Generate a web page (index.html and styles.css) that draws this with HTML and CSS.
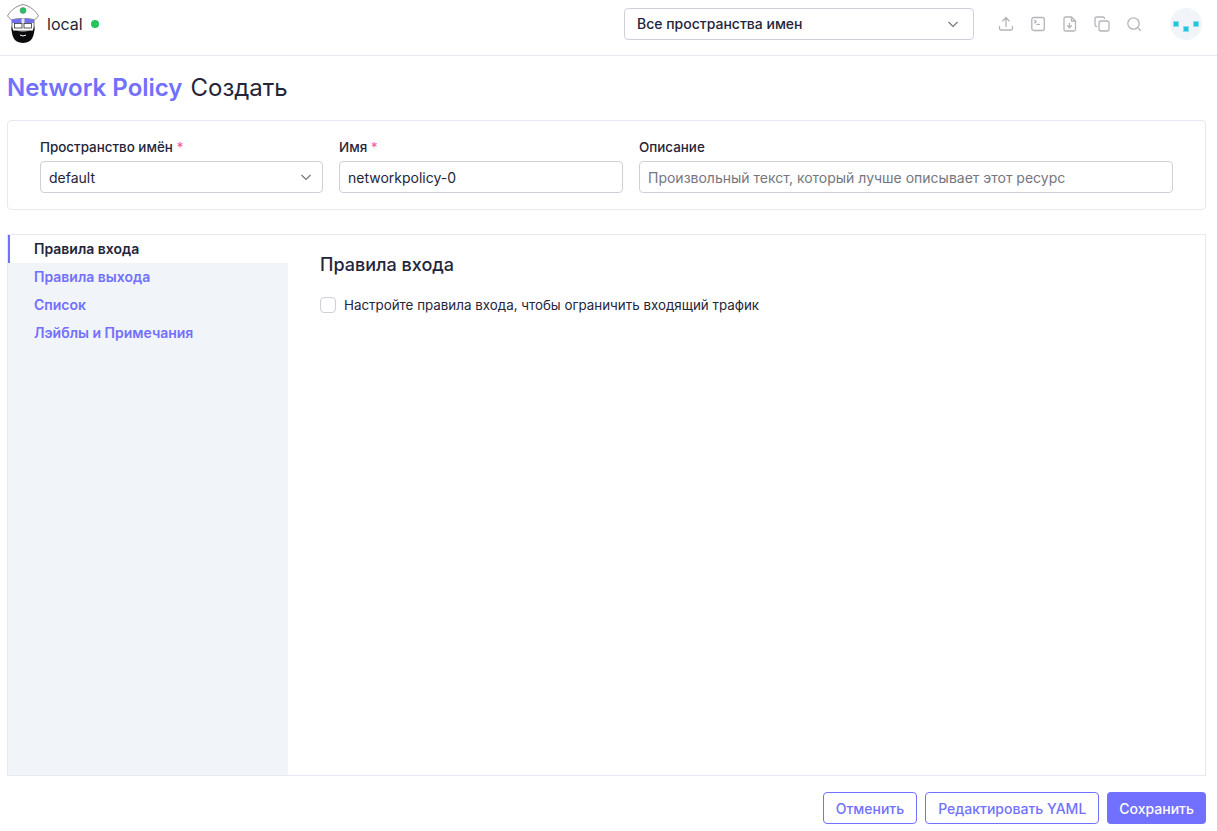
FILE: index.html
```html
<!DOCTYPE html>
<html lang="ru">

<head>
  <meta charset="UTF-8">
  <meta name="viewport" content="width=device-width, initial-scale=1.0">
  <title>Network Policy: Создать</title>
  <link rel="stylesheet" href="styles.css">
</head>

<body>
  <header class="topbar">
    <div class="cluster">
      <svg class="logo" viewBox="0 0 32 40" width="32" height="40">
        <path d="M5 14 H27 V27 H5 Z" fill="#fff" stroke="#333" stroke-width="0.7"/>
        <path d="M16 0.500 C9 2 3 7 0.500 12 L4.500 16 C8 14 24 14 27.500 16 L31.500 12 C29 7 23 2 16 0.500 Z" fill="#fff" stroke="#6e6e78" stroke-width="0.8"/>
        <circle cx="16" cy="6.500" r="3" fill="#22c55e" stroke="#6e6e78" stroke-width="0.5"/>
        <path d="M5 15.500 C9 14.500 23 14.500 27 15.500 V19 H5 Z" fill="#7270f0"/>
        <path d="M14.500 14.500 h3 v5 h-3 z" fill="#e8e8f4"/>
        <rect x="7.500" y="19.500" width="7.500" height="4.500" fill="#fff" stroke="#333" stroke-width="0.8"/>
        <rect x="17" y="19.500" width="7.500" height="4.500" fill="#fff" stroke="#333" stroke-width="0.8"/>
        <path d="M4.500 22 C4.500 31 6 38.800 16 39 C26 38.800 27.500 31 27.500 22 L25.500 27 C22 26 19 27.500 16 27.500 C13 27.500 10 26 6.500 27 Z" fill="#0b0b0d"/>
        <path d="M13 31 Q16 33 19 31" fill="none" stroke="#fff" stroke-width="1"/>
      </svg>
      <span class="cluster-name">local</span>
      <span class="status-dot"></span>
    </div>

    <div class="namespace-filter">
      <span>Все пространства имен</span>
      <svg class="chevron" viewBox="0 0 12 12" width="12" height="12"><path d="M1.500 4 L6 8.500 L10.500 4" /></svg>
    </div>

    <div class="tools">
      <svg class="tool" viewBox="0 0 16 16" width="16" height="16"><path d="M8 10.500 V1.800 M4.800 5 L8 1.500 L11.200 5 M1.500 10.500 V12.500 a1.500 1.500 0 0 0 1.500 1.500 H13 a1.500 1.500 0 0 0 1.500 -1.500 V10.500"/></svg>
      <svg class="tool" viewBox="0 0 16 16" width="16" height="16"><rect x="1.800" y="1.500" width="12.500" height="13" rx="2"/><path d="M4.500 4.500 L6.300 5.800 L4.500 7 M6.800 8.300 H9.500"/></svg>
      <svg class="tool" viewBox="0 0 16 16" width="16" height="16"><path d="M3.500 1 H9.500 L13.500 5 V13.500 a1.500 1.500 0 0 1 -1.500 1.500 H3.500 a1.500 1.500 0 0 1 -1.500 -1.500 V2.500 a1.500 1.500 0 0 1 1.500 -1.500 Z M9.500 1 V5 H13.500 M7.500 7.500 V11 M5.600 9.800 L7.500 11.800 L9.400 9.800"/></svg>
      <svg class="tool" viewBox="0 0 16 16" width="16" height="16"><rect x="5" y="5" width="10" height="10" rx="2"/><path d="M10.500 2.500 A1.500 1.500 0 0 0 9 1 H2.500 A1.500 1.500 0 0 0 1 2.500 V9 A1.500 1.500 0 0 0 2.500 10.500"/></svg>
      <svg class="tool" viewBox="0 0 16 16" width="16" height="16"><circle cx="7.500" cy="7.500" r="5.700"/><path d="M12 12 L14.500 14.500"/></svg>
    </div>

    <div class="avatar">
      <svg viewBox="0 0 32 32" width="32" height="32">
        <rect x="3.500" y="13.500" width="5" height="5" fill="#22c3dd" stroke="#86deee"/>
        <rect x="13.500" y="18.500" width="5" height="5" fill="#22c3dd" stroke="#86deee"/>
        <rect x="23.500" y="13.500" width="5" height="5" fill="#22c3dd" stroke="#86deee"/>
      </svg>
    </div>
  </header>

  <main class="page">
    <h1 class="page-title"><span class="resource">Network Policy</span> <span>Создать</span></h1>

    <section class="form-card">
      <div class="field field-ns">
        <label>Пространство имён <span class="req">*</span></label>
        <div class="control select">
          <span>default</span>
          <svg class="chevron" viewBox="0 0 12 12" width="12" height="12"><path d="M1.500 4 L6 8.500 L10.500 4" /></svg>
        </div>
      </div>
      <div class="field field-name">
        <label>Имя <span class="req">*</span></label>
        <input class="control" type="text" value="networkpolicy-0">
      </div>
      <div class="field field-desc">
        <label>Описание</label>
        <input class="control" type="text" placeholder="Произвольный текст, который лучше описывает этот ресурс">
      </div>
    </section>

    <section class="tabbed">
      <ul class="tabs">
        <li class="tab active">Правила входа</li>
        <li class="tab">Правила выхода</li>
        <li class="tab">Список</li>
        <li class="tab">Лэйблы и Примечания</li>
      </ul>
      <div class="tab-body">
        <h3>Правила входа</h3>
        <label class="check"><span class="box"></span>Настройте правила входа, чтобы ограничить входящий трафик</label>
      </div>
    </section>

    <footer class="actions">
      <button class="btn">Отменить</button>
      <button class="btn">Редактировать YAML</button>
      <button class="btn primary">Сохранить</button>
    </footer>
  </main>
</body>

</html>
```

FILE: styles.css
```css
* {
  margin: 0;
  padding: 0;
  box-sizing: border-box;
  font-family: Inter, "Liberation Sans", sans-serif;
}

html,
body {
  height: 100%;
}

body {
  background-color: #fff;
  color: #24253a;
  font-size: 14px;
  display: flex;
  flex-direction: column;
  overflow: hidden;
}

.topbar {
  height: 56px;
  flex: none;
  display: flex;
  align-items: center;
  padding: 0 15px 8px 7px;
  border-bottom: 1px solid #e8e8f0;
}

.cluster {
  display: flex;
  align-items: center;
  width: 617px;
}

.logo {
  display: block;
}

.cluster-name {
  font-size: 16px;
  margin-left: 8px;
}

.status-dot {
  width: 8px;
  height: 8px;
  border-radius: 50%;
  background-color: #22c55e;
  margin-left: 8px;
}

.namespace-filter {
  width: 350px;
  height: 32px;
  display: flex;
  align-items: center;
  justify-content: space-between;
  padding: 0 14px 0 12px;
  border: 1px solid #cfd0da;
  border-radius: 4px;
  font-weight: 500;
}

.chevron {
  fill: none;
  stroke: #74757f;
  stroke-width: 1.200;
}

.tools {
  display: flex;
  gap: 16px;
  margin-left: 24px;
}

.tool {
  fill: none;
  stroke: #b4b5bb;
  stroke-width: 1.300;
  stroke-linecap: round;
  stroke-linejoin: round;
}

.avatar {
  width: 32px;
  height: 32px;
  border-radius: 50%;
  background-color: #f1f4f9;
  margin-left: 28px;
}

.avatar svg {
  display: block;
}

.page {
  flex: 1;
  min-height: 0;
  display: flex;
  flex-direction: column;
  padding: 0 11px 7px 7px;
}

.page-title {
  height: 64px;
  flex: none;
  display: flex;
  align-items: center;
  gap: 8px;
  padding-bottom: 2px;
  font-size: 24px;
  font-weight: 400;
}

.resource {
  color: #7270ff;
  font-weight: 600;
}

.form-card {
  height: 90px;
  flex: none;
  display: flex;
  gap: 16px;
  padding: 16px 32px 0;
  border: 1px solid #e8e8f5;
  border-radius: 4px;
}

.field {
  display: flex;
  flex-direction: column;
}

.field-ns {
  width: 283px;
}

.field-name {
  width: 284px;
}

.field-desc {
  flex: 1;
}

.field label {
  height: 24px;
  line-height: 20px;
  font-weight: 500;
  font-size: 13.400px;
}

.req {
  color: #ee5e99;
}

.control {
  height: 32px;
  padding: 0 8px;
  border: 1px solid #cfd0da;
  border-radius: 4px;
  font-size: 14px;
  color: #24253a;
  background-color: #fff;
  outline: none;
}

.control::placeholder {
  color: #75767f;
}

.select {
  display: flex;
  align-items: center;
  justify-content: space-between;
  padding: 0 10px 0 8px;
}

.tabbed {
  flex: 1;
  min-height: 0;
  margin-top: 24px;
  display: flex;
  border: 1px solid #e8e8f5;
}

.tabs {
  width: 280px;
  flex: none;
  list-style: none;
  background-color: #f1f4f9;
}

.tab {
  height: 28px;
  line-height: 28px;
  padding-left: 26px;
  font-weight: 600;
  color: #7270ff;
  font-size: 14px;
}

.tab.active {
  background-color: #fff;
  color: #24253a;
  border-left: 2px solid #7270ff;
  padding-left: 24px;
}

.tab-body {
  flex: 1;
  padding: 20px 32px;
}

.tab-body h3 {
  font-size: 18px;
  font-weight: 500;
  line-height: 20px;
  margin-bottom: 20px;
}

.check {
  display: flex;
  align-items: center;
  height: 20px;
  font-size: 13.360px;
}

.box {
  width: 16px;
  height: 16px;
  border: 1px solid #cfd0da;
  border-radius: 4px;
  margin-right: 8px;
}

.actions {
  flex: none;
  display: flex;
  justify-content: flex-end;
  gap: 8px;
  padding-top: 16px;
}

.btn {
  height: 32px;
  padding: 0 12px;
  border: 1px solid #7270ff;
  border-radius: 4px;
  background-color: #fff;
  color: #7270ff;
  font-size: 14px;
  font-weight: 500;
}

.btn.primary {
  border: none;
  background-color: #7270ff;
  color: #fff;
  font-weight: 500;
}
```
